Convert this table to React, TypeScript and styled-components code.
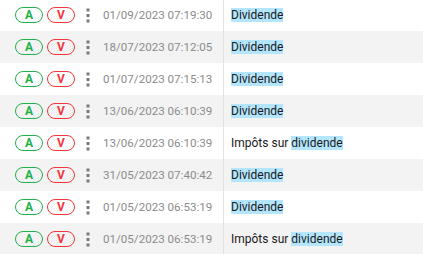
import React from 'react';
import styled, { createGlobalStyle } from 'styled-components';

const GlobalStyle = createGlobalStyle`
  html, body {
    margin: 0;
    padding: 0;
    background: #ffffff;
    font-family: Roboto, "Noto Sans", sans-serif;
    overflow: hidden;
  }
`;

interface Entry {
  date: string;
  prefix?: string;
  word: string;
}

const entries: Entry[] = [
  { date: '01/09/2023 07:19:30', word: 'Dividende' },
  { date: '18/07/2023 07:12:05', word: 'Dividende' },
  { date: '01/07/2023 07:15:13', word: 'Dividende' },
  { date: '13/06/2023 06:10:39', word: 'Dividende' },
  { date: '13/06/2023 06:10:39', prefix: 'Impôts sur ', word: 'dividende' },
  { date: '31/05/2023 07:40:42', word: 'Dividende' },
  { date: '01/05/2023 06:53:19', word: 'Dividende' },
  { date: '01/05/2023 06:53:19', prefix: 'Impôts sur ', word: 'dividende' },
];

const Kebab = () => (
  <svg width="4" height="16" viewBox="0 0 4 16">
    <rect x="0.5" y="1.5" width="3" height="3" fill="#7a7a7a" />
    <rect x="0.5" y="7" width="3" height="3" fill="#7a7a7a" />
    <rect x="0.5" y="12.5" width="3" height="3" fill="#7a7a7a" />
  </svg>
);

const App: React.FC = () => (
  <>
    <GlobalStyle />
    <List>
      {entries.map((e, i) => (
        <Row key={i} $striped={i % 2 === 1}>
          <Actions>
            <Chip $color="#22b04b">A</Chip>
            <Chip $color="#f2363a">V</Chip>
            <Menu><Kebab /></Menu>
            <DateText>{e.date}</DateText>
          </Actions>
          <Label>
            {e.prefix}
            <Mark>{e.word}</Mark>
          </Label>
        </Row>
      ))}
    </List>
  </>
);

const List = styled.div`
  width: 423px;
  margin-top: -1px;
`;

const Row = styled.div<{ $striped: boolean }>`
  display: flex;
  height: 32px;
  background: ${p => (p.$striped ? '#f3f3f3' : '#ffffff')};
`;

const Actions = styled.div`
  width: 224px;
  display: flex;
  align-items: center;
  padding-left: 15px;
  box-sizing: border-box;
  border-right: 1px solid #e2e2e2;
`;

const Chip = styled.span<{ $color: string }>`
  box-sizing: border-box;
  width: 28px;
  height: 16px;
  border: 1px solid ${p => p.$color};
  border-radius: 8px;
  color: ${p => p.$color};
  font-size: 12px;
  font-weight: 700;
  display: flex;
  align-items: center;
  justify-content: center;
  margin-right: 4px;
`;

const Menu = styled.span`
  display: flex;
  align-items: center;
  margin: 0 13px 0 7px;
`;

const DateText = styled.span`
  font-size: 11.6px;
  color: #8c8c8c;
  white-space: nowrap;
`;

const Label = styled.div`
  display: flex;
  align-items: center;
  padding-left: 7px;
  font-size: 12px;
  color: #1a1a1a;
  white-space: pre;
`;

const Mark = styled.span`
  background: #b3e5fc;
`;

export default App;
